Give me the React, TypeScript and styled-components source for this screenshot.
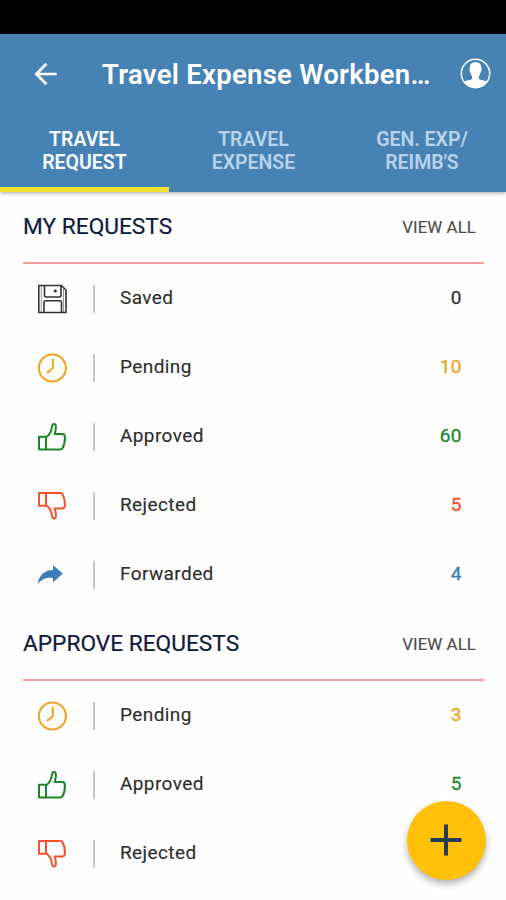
import React from "react";
import styled, { createGlobalStyle } from "styled-components";

const GlobalStyle = createGlobalStyle`
  *, *::before, *::after { box-sizing: border-box; }
  body { margin: 0; background: #fff; font-family: Roboto, "Liberation Sans", sans-serif; }
  button { font: inherit; border: 0; padding: 0; background: none; color: inherit; }
  svg { display: block; }
`;

const Screen = styled.div`
  width: 506px;
  height: 900px;
  overflow: hidden;
  background: #fefefe;
  display: flex;
  flex-direction: column;
  position: relative;
`;

const StatusBar = styled.div`
  flex: none;
  height: 34px;
  background: #000;
`;

const Header = styled.header`
  flex: none;
  height: 157.5px;
  background: #4682b4;
  color: #fff;
  display: flex;
  flex-direction: column;
  box-shadow: 0 1px 4px rgba(0, 0, 0, 0.35);
  z-index: 1;
`;

const Toolbar = styled.div`
  height: 79px;
  display: flex;
  align-items: center;
  padding: 0 15px 0 33px;
`;

const BackButton = styled.button`
  width: 69px;
  height: 26px;
`;

const Title = styled.h1`
  margin: 0;
  flex: 1;
  font-size: 27.5px;
  font-weight: 600;
  line-height: 36px;
  letter-spacing: 0.27px;
  white-space: nowrap;
  padding-top: 2px;
`;

const ProfileButton = styled.button`
  width: 31px;
  height: 31px;
`;

const Tabs = styled.nav`
  flex: 1;
  display: grid;
  grid-template-columns: 169px 169px 168px;
`;

const Tab = styled.button<{ $active?: boolean }>`
  font-size: 19.5px;
  font-weight: 600;
  line-height: 23px;
  text-align: center;
  white-space: pre-line;
  padding-top: 2px;
  padding-bottom: ${(p) => (p.$active ? 0 : 5)}px;
  color: ${(p) => (p.$active ? "#f7fbff" : "#b9d3ec")};
  border-bottom: ${(p) => (p.$active ? "5px solid #f5e02f" : "0")};
`;

const Section = styled.section`
  flex: none;
  padding: 0 22px 0 23px;
`;

const SectionHeader = styled.div`
  height: 72.5px;
  display: flex;
  align-items: center;
  justify-content: space-between;
  border-bottom: 2px solid #f3a09d;
  padding-right: 8px;
`;

const SectionTitle = styled.h2`
  margin: 0;
  font-size: 22.7px;
  font-weight: 400;
  color: #101a3c;
  -webkit-text-stroke: 0.2px;
`;

const ViewAll = styled.button`
  font-size: 16.9px;
  letter-spacing: 0.05px;
  color: #4c4c4c;
  -webkit-text-stroke: 0.15px;
`;

const Row = styled.div`
  height: 68.9px;
  display: grid;
  grid-template-columns: 70px 27px 1fr auto;
  align-items: center;
  padding-right: 22px;
`;

const IconSlot = styled.div`
  padding: 2px 0 0 14px;
`;

const Separator = styled.div`
  width: 2px;
  height: 28px;
  margin-top: 2px;
  background: #c6c6c6;
`;

const Label = styled.span`
  font-size: 19px;
  letter-spacing: 0.4px;
  color: #2e2e2e;
  padding-bottom: 1px;
  -webkit-text-stroke: 0.15px;
`;

const Count = styled.span<{ $color: string }>`
  font-size: 19px;
  letter-spacing: 0.5px;
  padding-bottom: 1px;
  color: ${(p) => p.$color};
  -webkit-text-stroke: 0.3px;
`;

const Fab = styled.button`
  position: absolute;
  right: 20.5px;
  bottom: 20.5px;
  width: 79px;
  height: 79px;
  border-radius: 50%;
  background: #ffc107;
  display: flex;
  align-items: center;
  justify-content: center;
  box-shadow: 0 4px 7px rgba(0, 0, 0, 0.3);
`;

type Kind = "Saved" | "Pending" | "Approved" | "Rejected" | "Forwarded";

const colors: Record<Kind, string> = {
  Saved: "#333333",
  Pending: "#eda321",
  Approved: "#1c8528",
  Rejected: "#f4512c",
  Forwarded: "#3a7cb5",
};

const thumb = "M2 14.8H9V27.4H2ZM9 15.4C12.6 13 14.4 9.6 15 4.6Q15.4 1.8 17.3 2C20 2.4 18.8 8.2 17.6 12.1H25.5Q28 12.3 27.9 15.4C28 19.6 27.2 23.4 25.4 26.4Q24.7 27.4 23.2 27.4H9";

const glyphs: Record<Kind, React.ReactNode> = {
  Saved: (
    <g strokeWidth="1.6">
      <path d="M1.8 1.5H24.5L29 6V28.5H1.8ZM7.5 1.5V11.5Q7.5 13 9 13H22.5Q24 13 24 11.5V1.5M7 28.5V18.3Q7 16.8 8.5 16.8H23Q24.5 16.8 24.5 18.3V28.5" />
      <path d="M4.3 2V28M26.5 5V28" strokeWidth=".5" />
      <circle cx="18.3" cy="7" r=".8" fill="currentColor" />
    </g>
  ),
  Pending: (
    <>
      <circle cx="15.4" cy="15" r="13.5" />
      <path d="M15.8 6.5V15.2L10.5 19.4" />
    </>
  ),
  Approved: <path d={thumb} />,
  Rejected: <path d={thumb} transform="matrix(1 0 0 -1 0 29.5)" />,
  Forwarded: (
    <path
      d="M.5 24C2.2 15.2 7.6 10.3 16 10V5.2L25.8 13.6L16 22.5V17.9C9.2 17.3 5.2 19 .5 24Z"
      fill="currentColor"
      stroke="none"
    />
  ),
};

const StatusSvg = styled.svg<{ $color: string }>`
  width: 30px;
  height: 30px;
  color: ${(p) => p.$color};
  fill: none;
  stroke: currentColor;
  stroke-width: 2;
  stroke-linejoin: round;
  stroke-linecap: round;
`;

interface Item {
  kind: Kind;
  count?: number;
}

function RequestSection({ title, items }: { title: string; items: Item[] }) {
  return (
    <Section>
      <SectionHeader>
        <SectionTitle>{title}</SectionTitle>
        <ViewAll>VIEW ALL</ViewAll>
      </SectionHeader>
      {items.map(({ kind, count }) => (
        <Row key={kind}>
          <IconSlot>
            <StatusSvg viewBox="0 0 30 30" $color={colors[kind]}>
              {glyphs[kind]}
            </StatusSvg>
          </IconSlot>
          <Separator />
          <Label>{kind}</Label>
          <Count $color={colors[kind]}>{count}</Count>
        </Row>
      ))}
    </Section>
  );
}

export default function App() {
  return (
    <Screen>
      <GlobalStyle />
      <StatusBar />
      <Header>
        <Toolbar>
          <BackButton aria-label="Back">
            <svg width="26" height="26" viewBox="0 0 26 26" fill="none" stroke="#fff" strokeWidth="2.7">
              <path d="M13.5 2.8L3.3 13L13.5 23.2M3.3 13H23.7" />
            </svg>
          </BackButton>
          <Title>Travel Expense Workben…</Title>
          <ProfileButton aria-label="Profile">
            <svg width="31" height="31" viewBox="0 0 31 31">
              <circle cx="15.5" cy="15.5" r="14.2" fill="none" stroke="#fff" strokeWidth="1.5" />
              <path
                d="M15.5 4.2C11.5 4.2 9.5 6.6 9.7 10.2C9 11.5 9.6 13.4 10.4 14.2C10.7 16.2 11.2 17.2 12 18V20.8C11 22.3 6.1 22.4 3.8 23.7A14.2 14.2 0 0 0 27.2 23.7C24.9 22.4 20 22.3 19 20.8V18C19.8 17.2 20.3 16.2 20.6 14.2C21.4 13.4 22 11.5 21.3 10.2C21.5 6.6 19.5 4.2 15.5 4.2Z"
                fill="#fff"
              />
            </svg>
          </ProfileButton>
        </Toolbar>
        <Tabs>
          <Tab $active>{"TRAVEL\nREQUEST"}</Tab>
          <Tab>{"TRAVEL\nEXPENSE"}</Tab>
          <Tab>{"GEN. EXP/\nREIMB'S"}</Tab>
        </Tabs>
      </Header>
      <RequestSection
        title="MY REQUESTS"
        items={[
          { kind: "Saved", count: 0 },
          { kind: "Pending", count: 10 },
          { kind: "Approved", count: 60 },
          { kind: "Rejected", count: 5 },
          { kind: "Forwarded", count: 4 },
        ]}
      />
      <RequestSection
        title="APPROVE REQUESTS"
        items={[
          { kind: "Pending", count: 3 },
          { kind: "Approved", count: 5 },
          { kind: "Rejected" },
        ]}
      />
      <Fab aria-label="Add request">
        <svg width="32" height="32" viewBox="0 0 32 32" stroke="#233f50" strokeWidth="4">
          <path d="M16 .5V31.5M.5 16H31.5" />
        </svg>
      </Fab>
    </Screen>
  );
}
